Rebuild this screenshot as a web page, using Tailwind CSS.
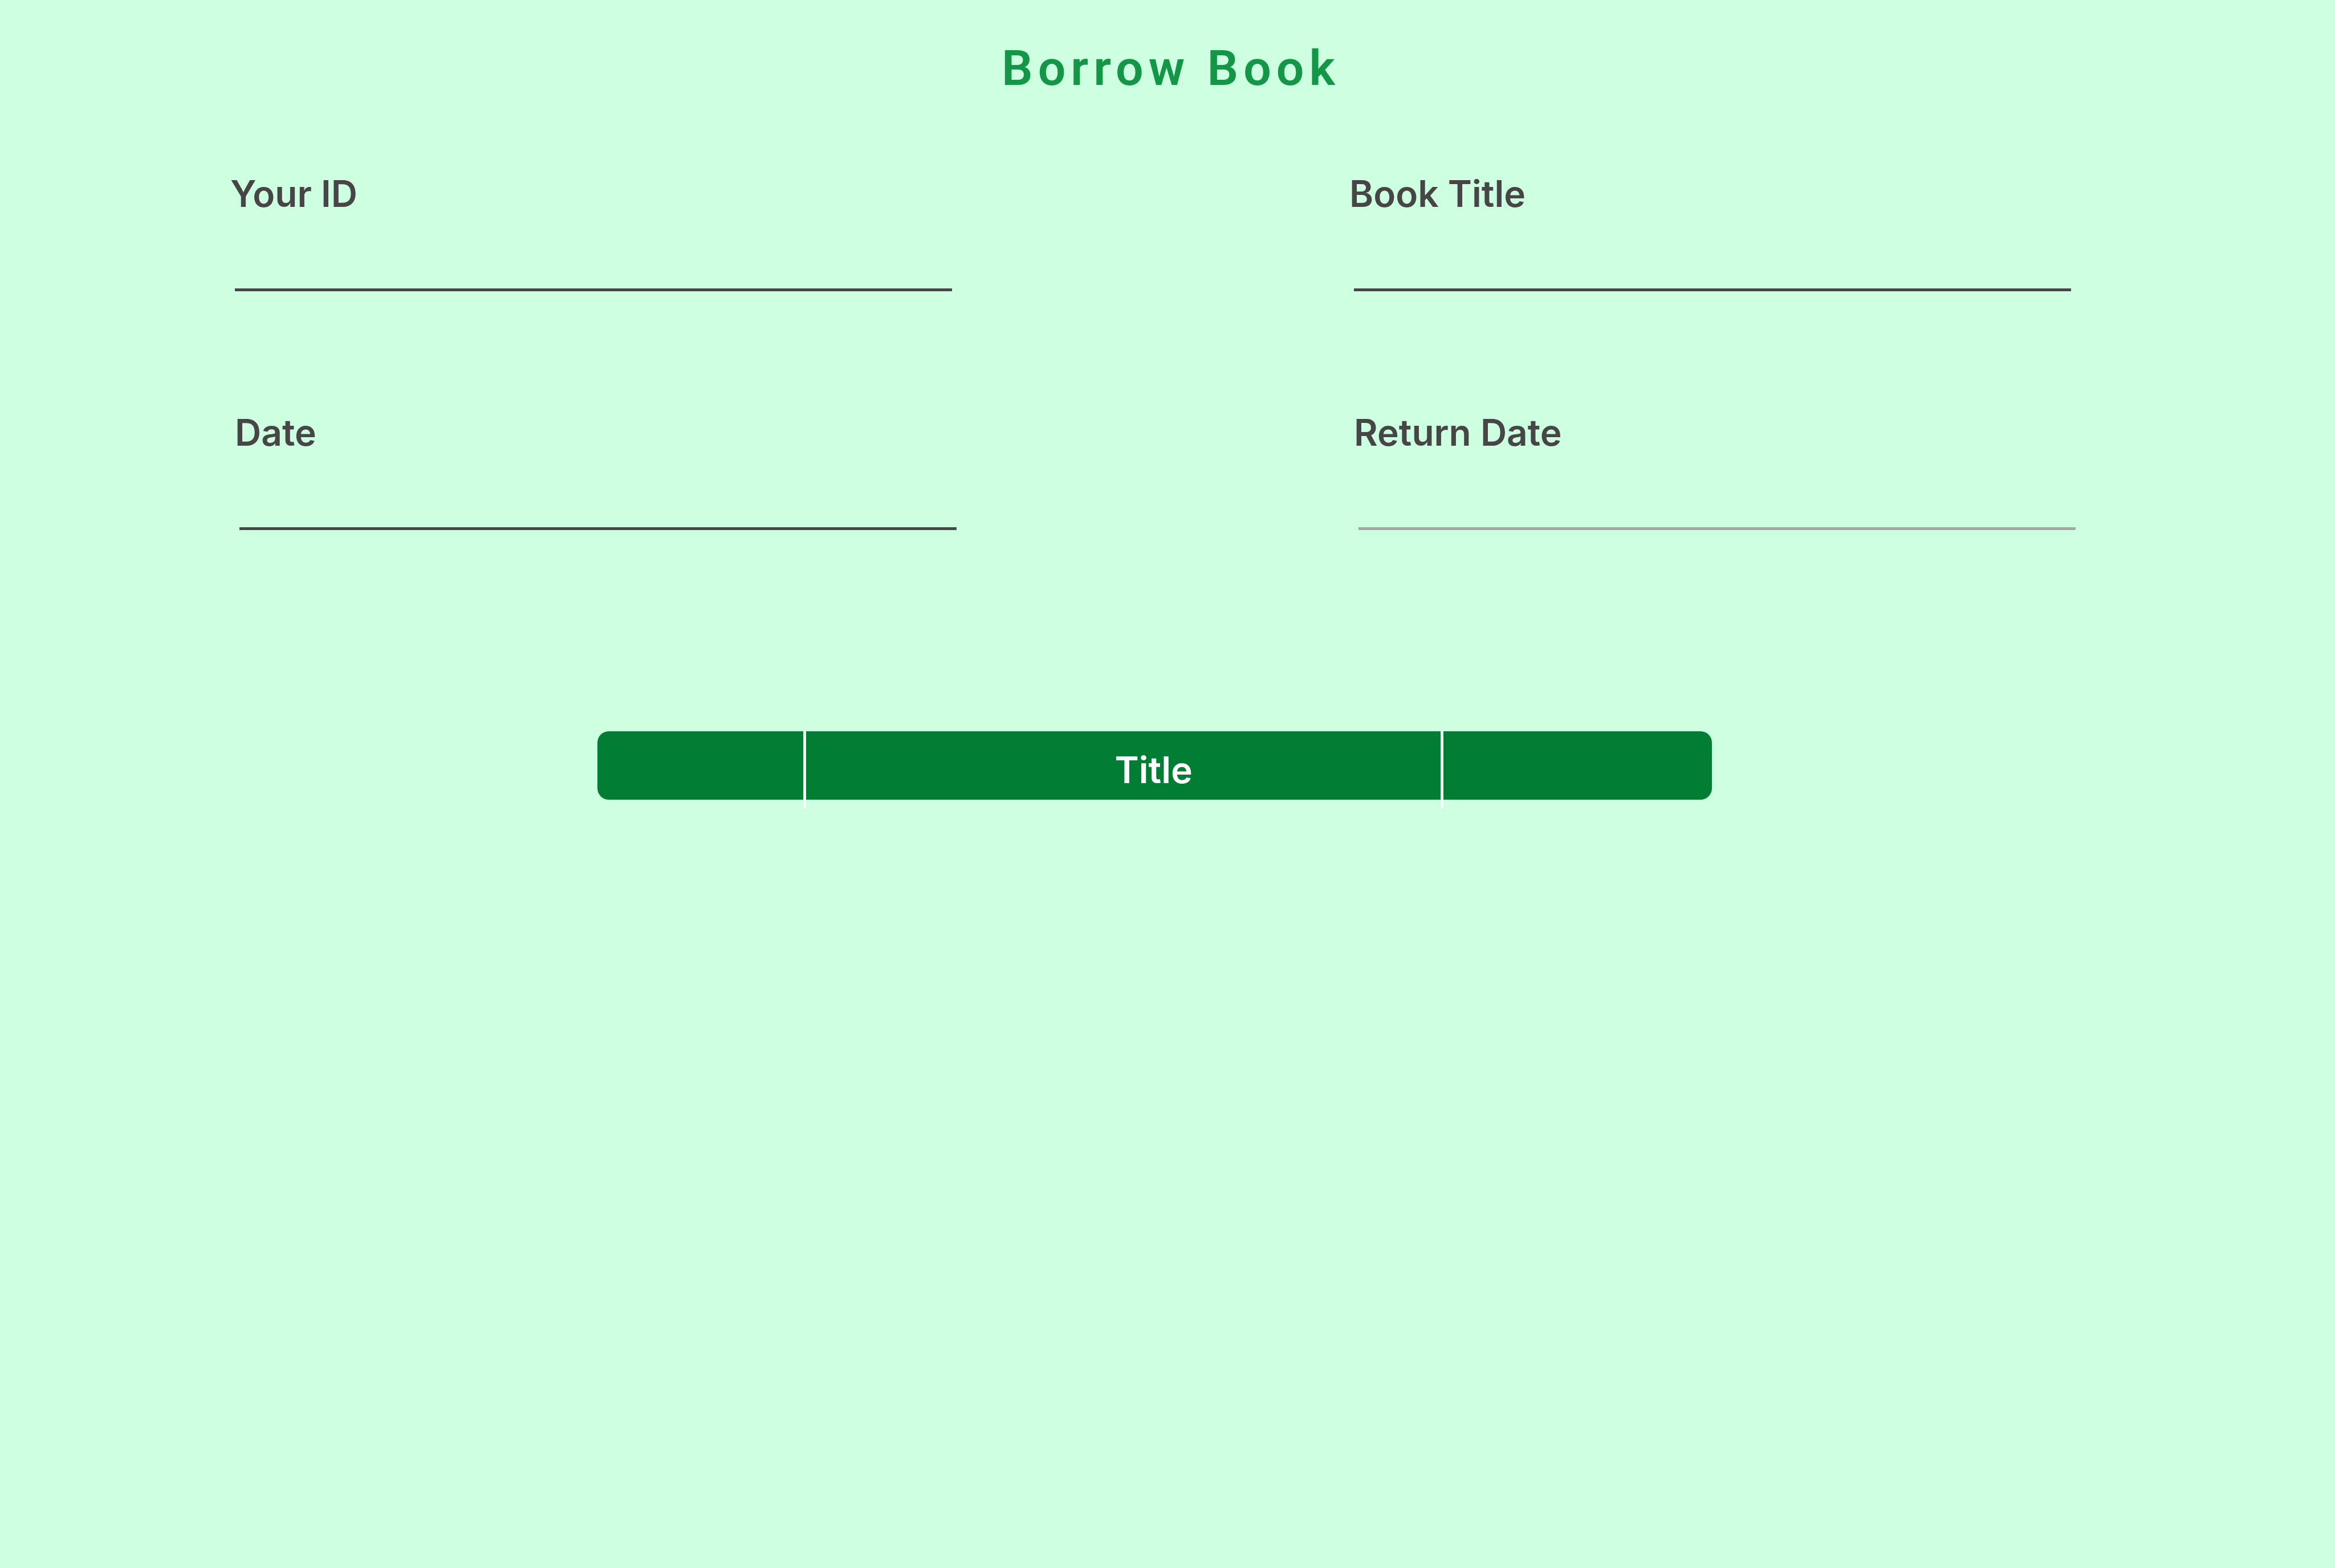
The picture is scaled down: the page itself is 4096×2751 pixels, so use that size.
<!DOCTYPE html>
<html lang="en">
<head>
<meta charset="utf-8">
<meta name="viewport" content="width=device-width, initial-scale=1">
<title>Borrow Book</title>
<script src="https://cdn.jsdelivr.net/npm/@tailwindcss/browser@4"></script>
</head>
<body class="min-h-screen bg-[#cdffe1] font-['Inter',sans-serif] text-[64px] leading-[76px] font-semibold text-[#484546]">
<main class="pt-[70px]">
  <h1 class="pl-[12px] text-center font-['Roboto',sans-serif] text-[86px] leading-[100px] font-semibold tracking-[9px] text-[#149647]">Borrow Book</h1>
  <form>
    <div class="grid grid-cols-[1266fr_697fr_1266fr] pt-[132px] pr-[463px] pl-[404px]">
      <div class="flex flex-col">
        <label for="your-id">Your ID</label>
        <input id="your-id" type="text" class="ml-[8px] h-[133px] border-b-[5px] border-[#484546] outline-none">
      </div>
      <div class="col-start-3 flex flex-col">
        <label for="book-title">Book Title</label>
        <input id="book-title" type="text" class="ml-[8px] h-[133px] border-b-[5px] border-[#484546] outline-none">
      </div>
    </div>
    <div class="grid grid-cols-[1266fr_697fr_1266fr] pt-[210px] pr-[455px] pl-[412px]">
      <div class="flex flex-col">
        <label for="date">Date</label>
        <input id="date" type="text" class="ml-[8px] h-[133px] border-b-[5px] border-[#484546] outline-none">
      </div>
      <div class="col-start-3 flex flex-col">
        <label for="return-date">Return Date</label>
        <input id="return-date" type="text" class="ml-[8px] h-[133px] border-b-[5px] border-[#a5a5a5] outline-none">
      </div>
    </div>
  </form>
  <div class="pt-[353px] pr-[1093px] pl-[1048px]">
    <table class="w-full table-fixed border-separate border-spacing-0 rounded-[20px] bg-[#027e34] text-white">
      <colgroup>
        <col class="w-[18.7%]">
        <col>
        <col class="w-[24.1%]">
      </colgroup>
      <thead>
        <tr>
          <td class="relative h-[120px] p-0"><span class="absolute top-0 right-0 h-[135px] w-[5px] bg-white"></span></td>
          <th scope="col" class="relative p-0 pt-[16px] pl-[102px] text-center font-semibold">Title<span class="absolute top-0 right-0 h-[135px] w-[5px] bg-white"></span></th>
          <td class="p-0"></td>
        </tr>
      </thead>
    </table>
  </div>
</main>
</body>
</html>
